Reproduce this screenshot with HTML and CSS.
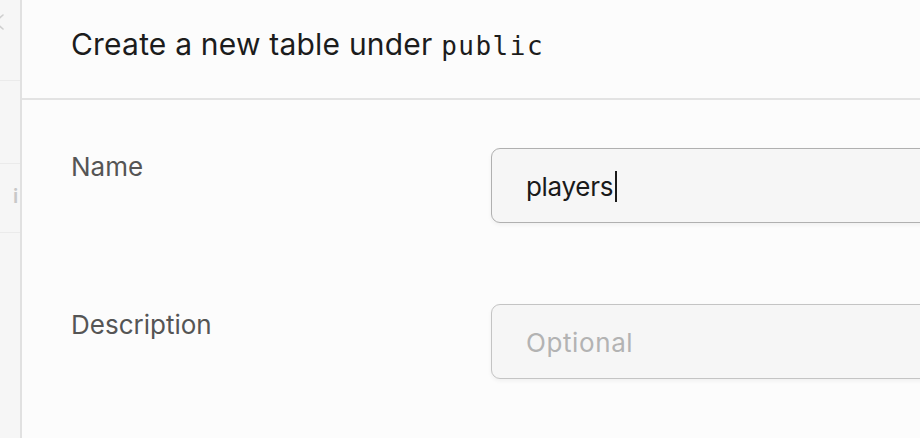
FILE: index.html
```html
<!DOCTYPE html>
<html>
<head>
<meta charset="utf-8">
<link rel="stylesheet" href="styles.css">
</head>
<body>
<div class="app">
  <aside class="sidebar">
    <div class="sb-row sb-top">
      <svg class="chev" width="10" height="16" viewBox="0 0 10 16"><path d="M9 1 L1 8 L9 15" fill="none" stroke="#cfcfcf" stroke-width="1.6" stroke-linecap="round" stroke-linejoin="round"/></svg>
    </div>
    <div class="sb-row sb-mid"></div>
    <div class="sb-row sb-info"><span class="info">i</span></div>
    <div class="sb-row sb-rest"></div>
  </aside>
  <main class="panel">
    <header class="panel-head">
      <h1 class="title">Create a new table under <code class="schema">public</code></h1>
    </header>
    <section class="panel-body">
      <div class="field">
        <label class="label">Name</label>
        <div class="input filled"><span class="value">players</span><span class="caret"></span></div>
      </div>
      <div class="field">
        <label class="label">Description</label>
        <div class="input"><span class="placeholder">Optional</span></div>
      </div>
    </section>
  </main>
</div>
</body>
</html>
```

FILE: styles.css
```css
* { box-sizing: border-box; }
html, body { margin: 0; padding: 0; }
body {
  width: 920px;
  height: 438px;
  overflow: hidden;
  background: #fcfcfc;
  font-family: "Inter", "Noto Sans", sans-serif;
}
.app {
  display: flex;
  height: 438px;
}
.sidebar {
  width: 22px;
  flex: none;
  background: #f6f6f6;
  border-right: 2px solid #e1e1e1;
  display: flex;
  flex-direction: column;
  overflow: hidden;
}
.sb-row { border-bottom: 1px solid #ebebeb; position: relative; }
.sb-top { height: 81px; }
.sb-mid { height: 83px; }
.sb-info { height: 69px; }
.sb-rest { flex: 1; border-bottom: none; }
.chev {
  position: absolute;
  left: -6px;
  top: 14px;
}
.info {
  position: absolute;
  left: 13px;
  top: 20px;
  font-size: 20px;
  font-weight: 600;
  color: #c8c8c8;
}
.panel {
  flex: 1;
  min-width: 0;
  display: flex;
  flex-direction: column;
  overflow: hidden;
}
.panel-head {
  height: 100px;
  border-bottom: 2px solid #e3e3e3;
  padding: 0 0 10px 49px;
  display: flex;
  align-items: center;
}
.title {
  margin: 0;
  font-size: 30px;
  font-weight: 400;
  color: #1c1c1c;
  letter-spacing: 0.2px;
  white-space: nowrap;
}
.schema {
  font-family: "DejaVu Sans Mono", monospace;
  font-size: 26px;
  letter-spacing: 1.5px;
  color: #1c1c1c;
}
.panel-body {
  padding: 48px 0 0 49px;
  display: flex;
  flex-direction: column;
  gap: 81px;
}
.field {
  display: flex;
  align-items: flex-start;
}
.label {
  width: 420px;
  flex: none;
  padding-top: 3px;
  font-size: 26px;
  color: #555555;
}
.field + .field .label { padding-top: 5px; }
.input {
  width: 600px;
  flex: none;
  height: 75px;
  border: 1.5px solid #c4c4c4;
  border-radius: 9px;
  background: #f6f6f6;
  padding: 2px 0 0 34px;
  display: flex;
  align-items: center;
  font-size: 26px;
  box-shadow: 0 2px 4px rgba(0,0,0,0.05);
}
.input.filled { border-color: #b0b0b0; }
.value { color: #1a1a1a; letter-spacing: -0.3px; }
.caret {
  width: 2px;
  height: 31px;
  background: #1a1a1a;
  margin-left: 2px;
}
.placeholder { color: #b3b3b3; letter-spacing: 0.6px; }
```
